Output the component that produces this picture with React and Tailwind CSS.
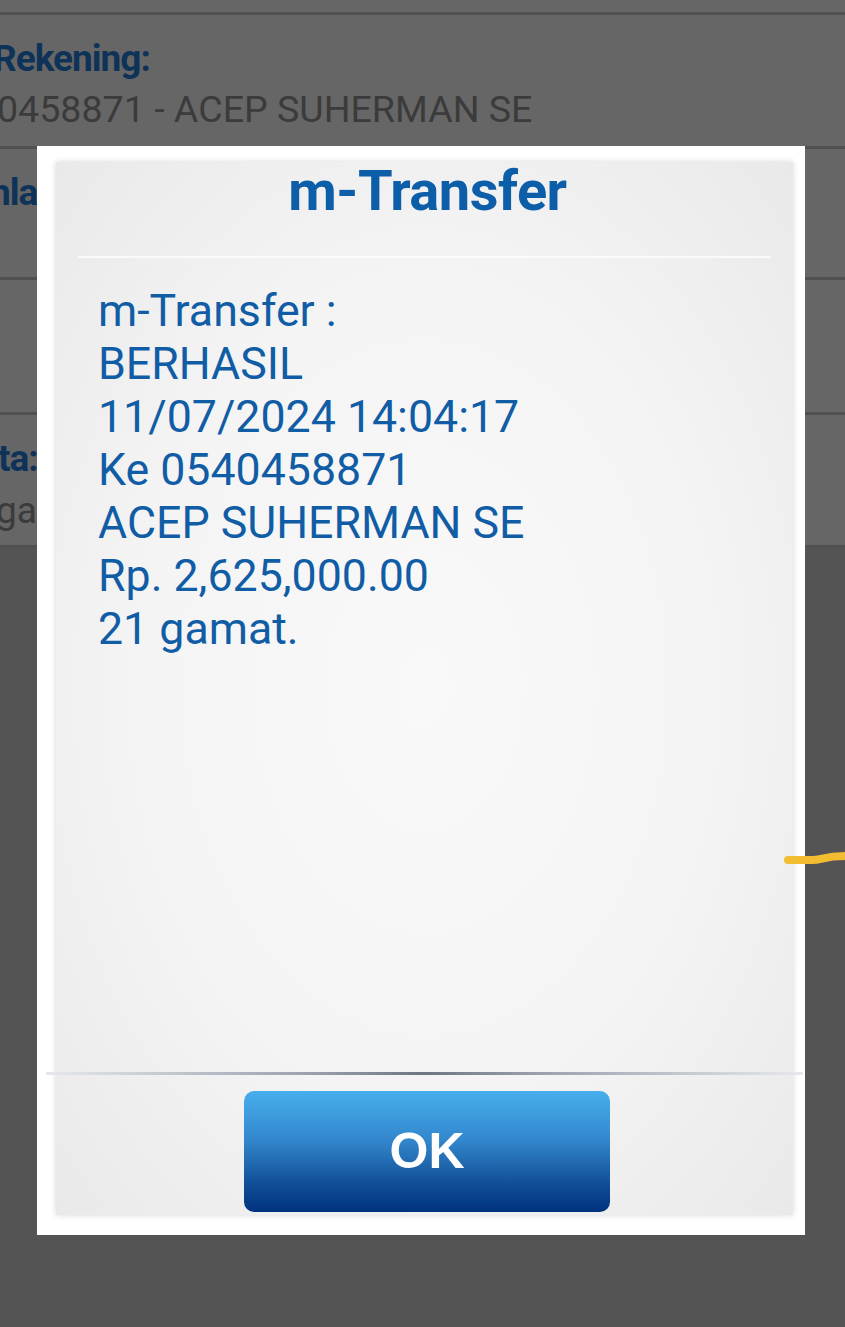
export default function App() {
  const lines = [
    'm-Transfer :',
    'BERHASIL',
    '11/07/2024 14:04:17',
    'Ke 0540458871',
    'ACEP SUHERMAN SE',
    'Rp. 2,625,000.00',
    '21 gamat.',
  ]

  return (
    <div className="relative h-[1327px] w-[845px] overflow-hidden bg-[#545454] font-['Roboto',sans-serif]">
      {/* dimmed page behind the dialog */}
      <div className="flex flex-col">
        <div className="h-[15px] border-b-[3px] border-[#505050] bg-[#666666]" />
        <div className="flex h-[134px] flex-col justify-center border-b-[3px] border-[#505050] bg-[#666666] pt-[6px]">
          <p className="-ml-[7px] text-[37px] font-bold leading-[46px] tracking-[-1px] text-[#0f3358]">Rekening:</p>
          <p className="-ml-[3px] mt-[4px] text-[37.6px] leading-[46px] text-[#3b3b3b]">0458871 - ACEP SUHERMAN SE</p>
        </div>
        <div className="flex h-[131px] flex-col border-b-[3px] border-[#505050] bg-[#666666] pt-[22px]">
          <p className="-ml-[10px] text-[37px] font-bold leading-[44px] tracking-[-1px] text-[#0f3358]">nlama</p>
        </div>
        <div className="h-[135px] border-b-[3px] border-[#505050] bg-[#666666]" />
        <div className="flex h-[133px] flex-col border-b-[3px] border-[#505050] bg-[#666666] pt-[22px]">
          <p className="-ml-[2px] text-[37px] font-bold leading-[44px] tracking-[-1px] text-[#0f3358]">ta:</p>
          <p className="-ml-[4px] mt-[8px] text-[37px] leading-[44px] text-[#3b3b3b]">gan</p>
        </div>
      </div>

      {/* dialog */}
      <div className="absolute left-[37px] top-[146px] flex h-[1089px] w-[768px] flex-col bg-white pb-[20px] pl-[19px] pr-[12px] pt-[16px]">
        <div className="flex flex-1 flex-col bg-[radial-gradient(ellipse_at_center,#f9f9f9_0%,#f4f4f4_55%,#e9e9e9_100%)] shadow-[0_0_6px_rgba(0,0,0,0.16)]">
          <div className="flex h-[96px] flex-col">
            <h1 className="pl-[6px] pt-[1px] text-center text-[56px] font-bold leading-[56px] tracking-[-0.5px] text-[#0c5ea8]">m-Transfer</h1>
            <div className="mx-[22px] mt-auto h-[2px] bg-white/70" />
          </div>
          <div className="flex-1 pl-[42px] pt-[27px]">
            {lines.map((l) => (
              <p key={l} className="text-[44.7px] leading-[53px] text-[#105da6]">{l}</p>
            ))}
          </div>
          <div className="-mx-[10px] h-[3px] bg-[linear-gradient(to_right,#e6e8ec,#9aa1ad_35%,#6e7684_50%,#9aa1ad_65%,#e6e8ec)]" />
          <div className="flex justify-center pb-[3px] pl-[5px] pt-[16px]">
            <button className="flex h-[121px] w-[366px] items-center justify-center rounded-[10px] bg-[linear-gradient(to_bottom,#47aeec_0%,#3388cd_40%,#125199_75%,#00327e_100%)] font-['Liberation_Sans',Arial,sans-serif] text-[50px] font-bold text-white">
              OK
            </button>
          </div>
        </div>
      </div>

      {/* yellow pen stroke */}
      <svg className="absolute left-[783px] top-[847px]" width="62" height="22" viewBox="0 0 62 22">
        <path d="M5 13 L29 13 C39 13 41 9 62 9" fill="none" stroke="#f2bd31" strokeWidth="8" strokeLinecap="round" />
      </svg>
    </div>
  )
}
